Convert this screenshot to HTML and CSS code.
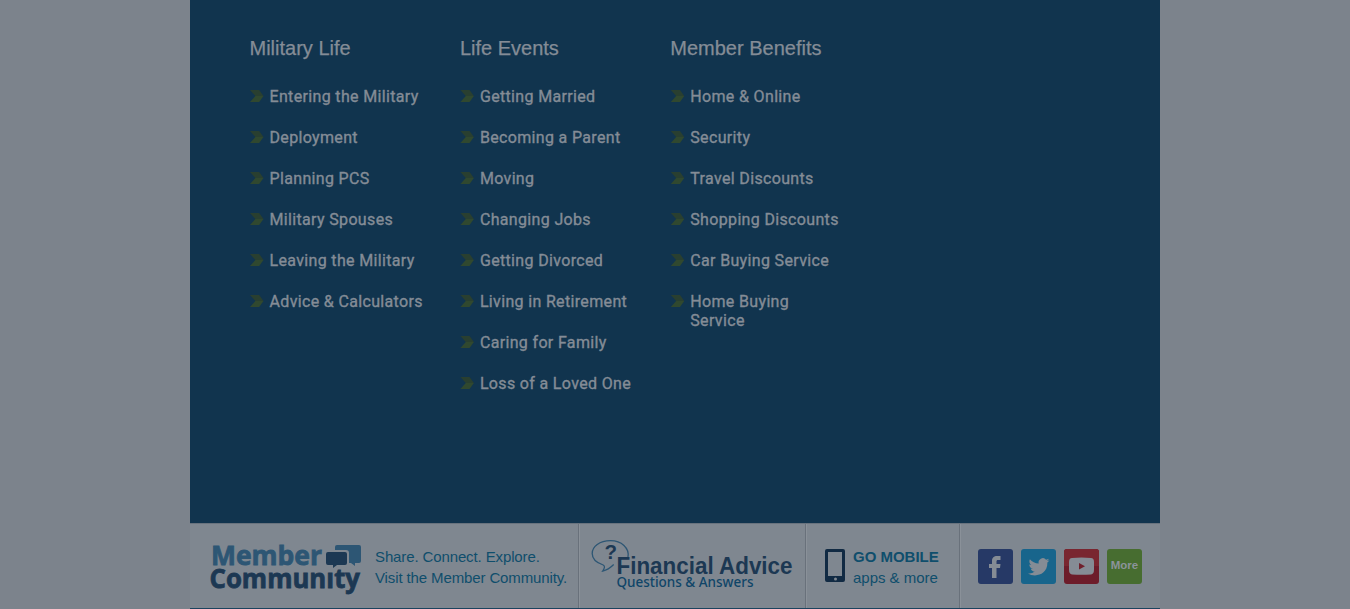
FILE: index.html
```html
<!DOCTYPE html>
<html lang="en">
<head>
<meta charset="utf-8">
<title>Member Benefits</title>
<link rel="stylesheet" href="styles.css">
</head>
<body>
<div class="page">
  <nav class="panel">
    <section class="column">
      <h2>Military Life</h2>
      <ul>
        <li>Entering the Military</li>
        <li>Deployment</li>
        <li>Planning PCS</li>
        <li>Military Spouses</li>
        <li>Leaving the Military</li>
        <li>Advice &amp; Calculators</li>
      </ul>
    </section>
    <section class="column">
      <h2>Life Events</h2>
      <ul>
        <li>Getting Married</li>
        <li>Becoming a Parent</li>
        <li>Moving</li>
        <li>Changing Jobs</li>
        <li>Getting Divorced</li>
        <li>Living in Retirement</li>
        <li>Caring for Family</li>
        <li>Loss of a Loved One</li>
      </ul>
    </section>
    <section class="column">
      <h2>Member Benefits</h2>
      <ul>
        <li>Home &amp; Online</li>
        <li>Security</li>
        <li>Travel Discounts</li>
        <li>Shopping Discounts</li>
        <li>Car Buying Service</li>
        <li>Home Buying<br>Service</li>
      </ul>
    </section>
  </nav>
  <footer class="bar">
    <div class="cell community">
      <svg class="logo" width="155" height="60" viewBox="0 0 155 60">
        <text class="logo-top" x="1" y="24.500" textLength="111" lengthAdjust="spacingAndGlyphs">Member</text>
        <text class="logo-bottom" x="-.5" y="47.800" textLength="150.500" lengthAdjust="spacingAndGlyphs">Communıty</text>
        <path fill="#2d5674" d="M127 5h22q2 0 2 2v14q0 2-2 2h-4v3l-4-3h-2V13q0-3-3-3h-11V7q0-2 2-2z"/>
        <path fill="#1c3853" d="M118 12h17q2 0 2 2v9q0 2-2 2h-8l-4 3v-3h-5q-2 0-2-2v-9q0-2 2-2z"/>
      </svg>
      <p>Share. Connect. Explore.<br>Visit the Member Community.</p>
    </div>
    <div class="cell advice">
      <svg width="206" height="60" viewBox="0 0 206 60">
        <path fill="none" stroke="#2d5674" stroke-width="1.300" d="M37 17C38.500 8 30.500 .700 19.500 .700S1.200 6.500 1.200 13.500c0 6 5 9.500 11 11.500 2 1 1.500 3-.5 6 5-1 8-3.500 11-6.500"/>
        <text class="question" x="13.500" y="19" textLength="12.500" lengthAdjust="spacingAndGlyphs">?</text>
        <text class="advice-title" x="25.500" y="33.500" textLength="176" lengthAdjust="spacingAndGlyphs">Financial Advice</text>
        <text class="advice-sub" x="25.500" y="47" textLength="137" lengthAdjust="spacingAndGlyphs">Questions &amp; Answers</text>
      </svg>
    </div>
    <div class="cell mobile">
      <svg width="20" height="33" viewBox="0 0 20 33"><path fill="#112a43" fill-rule="evenodd" d="M2 0h16q2 0 2 2v29q0 2-2 2H2q-2 0-2-2V2q0-2 2-2zM3 3v24h14V3z"/><circle cx="10.500" cy="30" r="1.500" fill="#7f8790"/></svg>
      <p><strong>GO MOBILE</strong><br>apps &amp; more</p>
    </div>
    <div class="cell social">
      <svg width="35" height="35" viewBox="0 0 35 35"><rect width="35" height="35" rx="3" fill="#263966"/><path fill="#858c95" d="M14 29V19h-3v-4h3v-3c0-3.500 2-5 5-5h3.500v4H20c-1.200 0-1.500.6-1.500 1.500V15h4l-.5 4h-3.500v10z"/></svg>
      <svg width="35" height="35" viewBox="0 0 35 35"><rect width="35" height="35" rx="3" fill="#18658c"/><path fill="#858c95" d="M28.500 11.300c-.8.4-1.600.6-2.500.7.9-.6 1.500-1.300 1.800-2.300-.8.500-1.700.8-2.700 1a4.300 4.300 0 0 0-7.400 3.900c-3.500-.2-6.700-1.800-8.800-4.400-1 1.800-.6 4.300 1.300 5.700-.7 0-1.300-.2-1.900-.5 0 2 1.500 3.800 3.400 4.200-.6.200-1.200.2-1.900.1.500 1.700 2.100 2.900 4 2.900A8.800 8.800 0 0 1 7 24.500c6 3.900 19.500 2.400 19.400-10.900.8-.6 1.500-1.300 2.100-2.300z"/></svg>
      <svg width="35" height="35" viewBox="0 0 35 35"><rect width="35" height="35" rx="3" fill="#6d1c2a"/><path d="M0 17V3q0-3 3-3h29q3 0 3 3v14z" fill="#792630"/><path fill="#858c95" d="M8 9q9.500-1 19 0 3 0 3 4v7.500q0 4.500-3 5-9.500.7-19 0-3-.5-3-5V13q0-4 3-4z"/><path fill="#70202c" d="M15 14v6.500l6-3.200z"/></svg>
      <span class="more">More</span>
    </div>
  </footer>
  <div class="base"></div>
</div>
</body>
</html>
```
FILE: styles.css
```css
* { box-sizing: border-box; }
body { margin: 0; height: 609px; overflow: hidden; background: #7c838c; font-family: "Liberation Sans", Arial, sans-serif; }
.page { width: 970px; margin: 0 auto; }
.panel { height: 523px; padding: 36px 60px 0 59.5px; display: flex; background: #11344e; color: #848c96; }
.column { width: 210.4px; }
.column h2 { margin: 0 0 27px; font-size: 20px; line-height: 24px; font-weight: 400; white-space: nowrap; -webkit-text-stroke: .25px; }
.column ul { margin: 0; padding: 0; list-style: none; font: 400 16px/19px Roboto, sans-serif; letter-spacing: .34px; -webkit-text-stroke: .35px; }
.column li { position: relative; padding-left: 20px; margin-bottom: 22px; white-space: nowrap; }
.column li::before, .column li::after { content: ""; position: absolute; left: .5px; top: 3px; width: 13.5px; height: 6px; background: #293f30; clip-path: polygon(0 0, 68% 0, 100% 100%, 40% 100%); }
.column li::after { top: 9px; background: #30482f; clip-path: polygon(40% 0, 100% 0, 68% 100%, 0 100%); }
.bar { height: 85px; display: flex; border-top: 1px solid #69737e; background: #7f8790; }
.cell { display: flex; border-right: 1px solid #69717b; box-shadow: inset 1px 0 #8a9199; }
.cell p { margin: 0; font-size: 15px; line-height: 21px; color: #0f4e6c; white-space: nowrap; }
.community { width: 389px; padding: 16px 0 0 20px; box-shadow: none; }
.community p { margin: 6px 0 0 10px; letter-spacing: -.12px; }
.logo { overflow: visible; }
.logo-top, .logo-bottom { font: 700 27px "Open Sans", sans-serif; fill: #2d5674; stroke: #2d5674; stroke-width: .8px; }
.logo-bottom { fill: #1c3853; stroke: #1c3853; }
.advice { width: 227px; padding: 16px 0 0 12px; }
.advice svg { overflow: visible; }
.question { font: bold 20px "Liberation Sans", sans-serif; fill: #1c3853; }
.advice-title { font: bold 23.5px "Liberation Sans", sans-serif; fill: #1c3853; }
.advice-sub { font: 500 14.5px "Noto Sans", sans-serif; fill: #0f4568; }
.mobile { width: 154px; padding: 25px 0 0 19px; }
.mobile p { margin: -3px 0 0 8px; letter-spacing: -.02px; }
.social { flex: 1; gap: 8px; padding: 25px 0 0 18px; border-right: 0; }
.more { width: 35px; height: 35px; border-radius: 3px; background: #476d30; color: #8b939a; font-size: 11.5px; font-weight: bold; line-height: 33px; text-align: center; }
.base { height: 1px; background: #1b435e; }
```
